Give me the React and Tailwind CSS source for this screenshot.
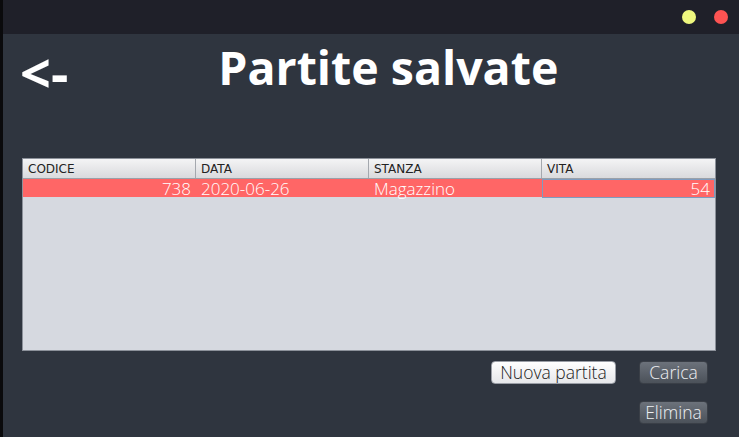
const COLUMNS = ['CODICE', 'DATA', 'STANZA', 'VITA'];

const SAVES = [{ codice: 738, data: '2020-06-26', stanza: 'Magazzino', vita: 54 }];

function DarkButton({ children, className = '' }) {
  return (
    <button
      className={`h-[23px] rounded-[4px] border border-[#3a3f47] bg-gradient-to-b from-[#6c727b] to-[#4c525a] text-[17.5px] font-light text-[#eef0f3] leading-none ${className}`}
    >
      {children}
    </button>
  );
}

export default function App() {
  return (
    <div className="flex w-[739px] h-[437px] overflow-hidden" style={{ fontFamily: '"Open Sans", sans-serif' }}>
      <div className="w-[3px] shrink-0 bg-[#0a0a0c]" />
      <div className="flex-1 flex flex-col bg-[#2f353f]">
        {/* title bar */}
        <div className="h-[34px] shrink-0 bg-[#1f2029] flex items-center justify-end gap-[18px] pr-[11px]">
          <span className="w-[14px] h-[14px] rounded-full bg-[#eef77e]" />
          <span className="w-[14px] h-[14px] rounded-full bg-[#fd5352]" />
        </div>

        {/* heading */}
        <div className="flex items-start h-[124px]">
          <span className="ml-[17px] mt-[11px] text-[54px] font-bold text-white leading-none">&lt;-</span>
          <h1 className="ml-[150px] mt-[10px] text-[46.5px] font-bold text-white leading-none">
            Partite salvate
          </h1>
        </div>

        {/* table */}
        <div className="ml-[19px] w-[694px] h-[193px] border border-[#8c919a] bg-[#d6d9e0] flex flex-col">
          <div className="grid grid-cols-4 h-[20px] bg-gradient-to-b from-[#f4f4f5] to-[#d9dadd] border-b border-[#9aa0a8]">
            {COLUMNS.map((c, i) => (
              <div
                key={c}
                className={`flex items-center pl-[5px] text-[12px] text-[#222] ${i < 3 ? 'border-r border-[#a4a8ae]' : ''}`}
                style={{ fontFamily: '"DejaVu Sans", sans-serif' }}
              >
                {c}
              </div>
            ))}
          </div>
          {SAVES.map((s) => (
            <div key={s.codice} className="grid grid-cols-4 h-[18px] bg-[#ff6666] text-[17px] font-light text-white leading-[17px]">
              <div className="flex items-center justify-end pr-[5px]">{s.codice}</div>
              <div className="flex items-center pl-[5px]">{s.data}</div>
              <div className="flex items-center pl-[5px]">{s.stanza}</div>
              <div className="flex items-center justify-end pr-[4px] border border-[#7d9cc0]">{s.vita}</div>
            </div>
          ))}
        </div>

        {/* buttons */}
        <div className="flex justify-end gap-[23px] mt-[10px] pr-[31px]">
          <button className="w-[125px] h-[23px] rounded-[4px] border border-[#9a9ea6] bg-gradient-to-b from-[#ffffff] to-[#e6e7ea] text-[17.5px] font-light text-[#1a1a1a] leading-none">
            Nuova partita
          </button>
          <DarkButton className="w-[69px]">Carica</DarkButton>
        </div>
        <div className="flex justify-end mt-[17px] pr-[31px]">
          <DarkButton className="w-[69px]">Elimina</DarkButton>
        </div>
      </div>
    </div>
  );
}
